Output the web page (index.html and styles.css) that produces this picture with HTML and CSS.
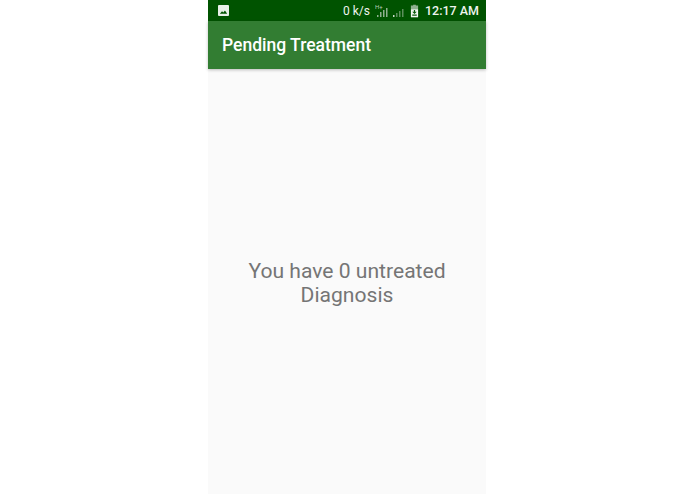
FILE: index.html
```html
<!DOCTYPE html>
<html lang="en">
<head>
<meta charset="utf-8">
<title>Pending Treatment</title>
<link rel="stylesheet" href="styles.css">
</head>
<body>
<div class="phone">
  <div class="status">
    <svg class="img-icon" viewBox="0 0 12 12"><path fill="#e8f0e8" fill-rule="evenodd" d="M1 0h10a1 1 0 0 1 1 1v10a1 1 0 0 1-1 1H1a1 1 0 0 1-1-1V1a1 1 0 0 1 1-1zM2 9.500h8L7.600 6 5.800 8.200 4.400 6.800z"/></svg>
    <div class="status-right">
      <span class="speed">0 k/s</span>
      <svg class="signal" viewBox="0 0 32 14">
        <text x="0" y="5" class="hplus">H+</text>
        <g fill="#8fb08f"><rect x="2" y="11" width="1.5" height="2"/><rect x="5" y="8" width="1.5" height="5"/><rect x="8" y="6" width="1.5" height="7"/><rect x="11" y="4" width="1.5" height="9"/></g>
        <g fill="#5c8f5c"><rect x="18" y="11" width="1.5" height="2" fill="#c8d8c8"/><rect x="21" y="9" width="1.5" height="4"/><rect x="24" y="7" width="1.5" height="6"/><rect x="27" y="5" width="1.5" height="8"/></g>
      </svg>
      <svg class="battery" viewBox="0 0 10 14"><path fill="#8fb08f" d="M3.500 0h3v1H9v4H1V1h2.500z"/><path fill="#f2f6f2" d="M1 5h8v9H1z"/><path fill="#0a5a0a" d="M4.300 5.800h1.400v2h1.800L5 10.200 2.500 7.800h1.800zM2.500 11h5v1.200h-5z"/></svg>
      <span class="clock">12:17 AM</span>
    </div>
  </div>
  <header class="appbar">Pending Treatment</header>
  <main class="content">
    <p class="message">You have 0 untreated<br>Diagnosis</p>
  </main>
</div>
</body>
</html>
```
FILE: styles.css
```css
html, body {
  margin: 0;
  height: 100%;
  background: #fff;
}
body {
  display: flex;
  justify-content: center;
  overflow: hidden;
}
.phone {
  width: 278px;
  height: 494px;
  margin-right: 1px;
  display: flex;
  flex-direction: column;
  background: #fafafa;
  font-family: Roboto, "Liberation Sans", sans-serif;
}
.status {
  height: 21px;
  flex: none;
  background: #005300;
  display: flex;
  align-items: center;
  justify-content: space-between;
  padding: 0 7px 0 10px;
  color: #eef4ee;
}
.img-icon {
  width: 11px;
  height: 11px;
}
.status-right {
  display: flex;
  align-items: center;
  font-size: 13px;
}
.speed {
  font-size: 12px;
}
.signal {
  width: 32px;
  height: 14px;
  margin-left: 5px;
}
.hplus {
  font-size: 6px;
  font-family: Roboto, sans-serif;
  fill: #b8ccb8;
}
.battery {
  width: 9px;
  height: 14px;
  margin-left: 3px;
}
.clock {
  margin-left: 6px;
  font-weight: 500;
  font-size: 12.5px;
}
.appbar {
  height: 48px;
  flex: none;
  background: #327d32;
  color: #fff;
  font-size: 17.5px;
  font-weight: 500;
  line-height: 49px;
  padding-left: 14px;
  box-shadow: 0 1px 3px rgba(0, 0, 0, 0.25);
  position: relative;
}
.content {
  flex: 1;
  display: flex;
  align-items: center;
  justify-content: center;
}
.message {
  margin: 3px 0 0;
  color: #757575;
  font-size: 21.1px;
  line-height: 24px;
  text-align: center;
}
```
